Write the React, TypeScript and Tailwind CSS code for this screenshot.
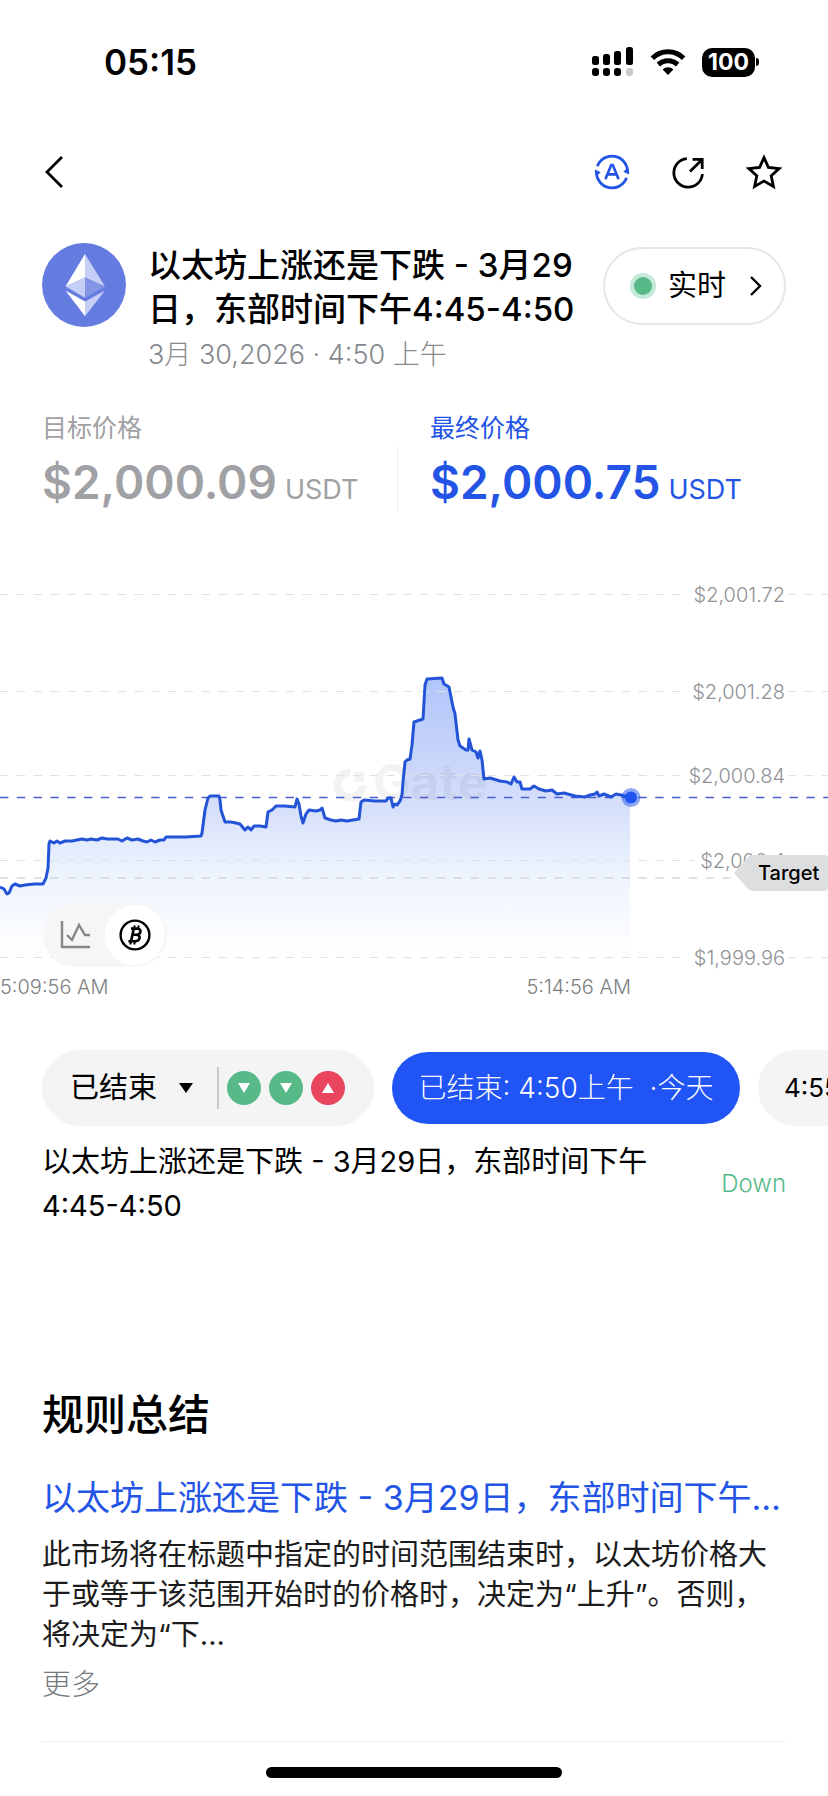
import * as React from "react";
import { clsx } from "clsx";

const GRID_LINES = [
    { y: 34, label: "$2,001.72", lineEnd: 682 },
    { y: 131, label: "$2,001.28", lineEnd: 682 },
    { y: 215, label: "$2,000.84", lineEnd: 682 },
    { y: 300, label: "$2,000.4", lineEnd: 694 },
    { y: 397, label: "$1,999.96", lineEnd: 682 },
];

const CURRENT_Y = 237;
const TARGET_Y = 318;

const PRICE_POINTS = [
    [0, 327], [4, 329], [7, 334], [9, 333], [12, 326], [15, 324], [20, 326], [25, 325],
    [34, 324], [43, 324], [46, 318], [48, 308], [49, 284], [50, 281], [54, 283], [57, 281],
    [60, 283], [65, 281], [72, 281], [82, 279], [87, 280], [91, 279], [97, 280], [102, 278],
    [107, 279], [118, 279], [122, 281], [127, 278], [132, 280], [138, 279], [143, 281],
    [147, 282], [151, 280], [155, 282], [160, 280], [164, 280], [166, 277], [185, 277],
    [201, 276], [202, 273], [205, 250], [208, 238], [210, 236], [219, 236], [220, 240],
    [221, 250], [225, 262], [231, 262], [236, 263], [240, 264], [245, 270], [248, 267],
    [251, 270], [254, 266], [260, 266], [266, 267], [268, 252], [272, 250], [276, 246],
    [285, 246], [295, 247], [297, 239], [299, 244], [301, 256], [303, 263], [306, 254],
    [309, 250], [316, 251], [320, 250], [322, 248], [325, 258], [331, 260], [336, 261],
    [341, 260], [347, 261], [353, 260], [359, 259], [361, 242], [364, 240], [375, 241],
    [386, 241], [388, 238], [391, 238], [393, 247], [395, 244], [397, 245], [400, 241],
    [402, 235], [403, 222], [405, 202], [407, 200], [410, 199], [412, 185], [414, 162],
    [423, 159], [425, 125], [427, 119], [442, 118], [444, 124], [449, 127], [453, 147],
    [455, 154], [458, 180], [460, 186], [466, 190], [468, 190], [469, 179], [472, 190],
    [476, 192], [478, 198], [480, 191], [482, 200], [484, 219], [490, 218], [500, 221],
    [507, 222], [511, 224], [514, 217], [517, 222], [520, 222], [522, 229], [530, 229],
    [534, 226], [539, 229], [546, 231], [552, 230], [557, 234], [564, 233], [575, 236],
    [585, 237], [590, 235], [595, 234], [597, 232], [599, 236], [604, 234], [611, 237],
    [616, 234], [621, 235], [625, 236], [630, 237],
];

const LINE_PATH = PRICE_POINTS.map(([x, y], i) => `${i === 0 ? "M" : "L"}${x} ${y}`).join(" ");

const RESULTS = [
    { id: 1, up: false },
    { id: 2, up: false },
    { id: 3, up: true },
];

function StatusBar() {
    return (
        <div className="flex h-[124px] items-center justify-between pl-[104px] pr-[69px]">
            <span className="text-[35px] font-semibold leading-10">05:15</span>
            <div className="flex items-center gap-4">
                <svg className="h-[30px] w-[42px]" viewBox="0 0 42 30" aria-hidden="true">
                    <rect x="0" y="9" width="7" height="9" rx="2.5" />
                    <rect x="11" y="7" width="7" height="11" rx="2.5" />
                    <rect x="22" y="4" width="7" height="14" rx="2.5" />
                    <rect x="34" y="0" width="7" height="18" rx="2.5" />
                    <rect x="0" y="21" width="7" height="8" rx="3" />
                    <rect x="11" y="21" width="7" height="8" rx="3" />
                    <rect x="22" y="21" width="7" height="8" rx="3" />
                    <rect x="34" y="21" width="7" height="8" rx="3" fill="#c9c9c9" />
                </svg>
                <svg className="h-[28px] w-[36px]" viewBox="0 0 36 28" fill="none" stroke="#000" strokeWidth="5" aria-hidden="true">
                    <path d="M2.4 10.2a22.4 22.4 0 0 1 31.2 0" />
                    <path d="M8.4 16.6a13.8 13.8 0 0 1 19.2 0" />
                    <path d="M18 27l-5.4-5.4a7.6 7.6 0 0 1 10.8 0z" fill="#000" stroke="none" />
                </svg>
                <div className="flex items-center gap-px">
                    <span className="flex h-[29px] w-[53px] items-center justify-center rounded-[10px] bg-black text-[23px] font-bold leading-none text-white">
                        100
                    </span>
                    <span className="h-2 w-[3px] rounded-r-full bg-black" />
                </div>
            </div>
        </div>
    );
}

function NavBar() {
    return (
        <nav className="flex h-24 items-center justify-between pl-[42px] pr-[46px]">
            <button type="button" aria-label="返回">
                <svg className="h-9 w-6" viewBox="0 0 24 36" fill="none" stroke="#000" strokeWidth="2.8">
                    <path d="M20 3L5 18l15 15" />
                </svg>
            </button>
            <div className="flex items-center gap-10">
                <button type="button" aria-label="翻译">
                    <svg className="size-9" viewBox="0 0 36 36" fill="none" stroke="#2354e6" strokeWidth="2.8">
                        <path d="M3.4 12.2A15.600 15.600 0 0 1 33.600 18" />
                        <path d="M32.600 23.8A15.600 15.600 0 0 1 2.400 18" />
                        <path d="M1.2 16l5 2.600-4 2.200zM34.800 20l-5-2.600 4-2.200z" fill="#2354e6" strokeWidth="1" />
                        <path d="M11.4 25.2L17.2 11h1.600l5.800 14.200M13.6 20.4h8.800" strokeWidth="2.6" />
                    </svg>
                </button>
                <button type="button" aria-label="分享">
                    <svg className="size-9" viewBox="0 0 36 36" fill="none" stroke="#000" strokeWidth="2.8">
                        <path d="M16.8 4.6A14.3 14.3 0 1 0 32.4 20" />
                        <path d="M20 17.6L31.4 6.2M22.6 5.4h9.6V15" />
                    </svg>
                </button>
                <button type="button" aria-label="收藏">
                    <svg className="size-9" viewBox="0 0 36 36" fill="none" stroke="#000" strokeWidth="2.8">
                        <path d="M18 3.600l4.400 9.800 10.800 1.200-8 7.200 2.200 10.600L18 27l-9.400 5.400 2.200-10.600-8-7.200 10.800-1.200z" />
                    </svg>
                </button>
            </div>
        </nav>
    );
}

function EthereumLogo() {
    return (
        <svg className="size-[84px] shrink-0" viewBox="0 0 84 84" role="img" aria-label="Ethereum">
            <circle cx="42" cy="42" r="42" fill="#647be0" />
            <path d="M43 11v23.5L23.5 43.5z" fill="#fff" />
            <path d="M43 11v23.5L63 43.5z" fill="#c5cef5" />
            <path d="M43 34.5v20.2L23.5 43.5z" fill="#c5cef5" />
            <path d="M43 34.5v20.2L63 43.5z" fill="#8495e6" />
            <path d="M43 58.6v14.6L23.5 47.4z" fill="#fff" />
            <path d="M43 58.6v14.6L63 47.4z" fill="#c5cef5" />
        </svg>
    );
}

function MarketHeader() {
    return (
        <header className="flex items-start px-[42px] pt-[23px]">
            <EthereumLogo />
            <div className="ml-[22px] min-w-0 flex-1">
                <h1 className="text-[33px] font-medium leading-[44px]">
                    以太坊上涨还是下跌 - 3月29日，东部时间下午4:45-4:50
                </h1>
                <p className="mt-0.5 text-[27px] font-light leading-[44px] text-[#85888c]">3月 30,2026 · 4:50 上午</p>
            </div>
            <button
                type="button"
                className="ml-4 mt-1 flex h-[78px] w-[183px] shrink-0 items-center rounded-full border-2 border-[#e6e6e6] pl-[25px]"
            >
                <span className="flex size-[26px] items-center justify-center rounded-full bg-[#c3e9d8]">
                    <span className="size-[18px] rounded-full bg-[#56b987]" />
                </span>
                <span className="ml-3 text-[29px]">实时</span>
                <svg className="ml-6 h-6 w-3" viewBox="0 0 12 24" fill="none" stroke="#000" strokeWidth="2.4">
                    <path d="M1 3l9 9-9 9" />
                </svg>
            </button>
        </header>
    );
}

function Price({ label, value, active }: { label: string; value: string; active?: boolean }) {
    return (
        <div className={active ? "text-[#2354e6]" : "text-[#9fa1a4]"}>
            <div className="text-[25px] leading-9">{label}</div>
            <div className="mt-3 flex items-baseline gap-2">
                <span className="text-[46px] font-semibold leading-[48px]">{value}</span>
                <span className="text-[27px]">USDT</span>
            </div>
        </div>
    );
}

function PriceChart() {
    const [mode, setMode] = React.useState("coin");

    return (
        <section className="relative">
            <svg className="block w-full" viewBox="0 0 828 450">
                <defs>
                    <linearGradient id="area" x1="0" y1="118" x2="0" y2="397" gradientUnits="userSpaceOnUse">
                        <stop offset="0" stopColor="#2360f0" stopOpacity="0.36" />
                        <stop offset="0.5" stopColor="#2354e6" stopOpacity="0.17" />
                        <stop offset="0.72" stopColor="#2f7bf0" stopOpacity="0.08" />
                        <stop offset="1" stopColor="#2f7bf0" stopOpacity="0" />
                    </linearGradient>
                </defs>

                <path d={`${LINE_PATH} V397 H0 Z`} fill="url(#area)" />

                {/* Watermark */}
                <g opacity="0.045">
                    <path d="M350 212.500a12.500 12.500 0 1 0 12.500 12.500" fill="none" stroke="#000" strokeWidth="8" />
                    <rect x="354" y="212" width="10" height="10" />
                    <text x="373" y="240" fontSize="50" fontWeight="700">Gate</text>
                </g>

                {/* Price grid */}
                {GRID_LINES.map((line) => (
                    <g key={line.label}>
                        <path
                            d={`M0 ${line.y + 0.5}H${line.lineEnd}M788 ${line.y + 0.5}H828`}
                            stroke="#dfe1e5"
                            strokeDasharray="8.4 8.4"
                        />
                        <text x="785" y={line.y + 8} textAnchor="end" fontSize="20" fontWeight="300" fill="#909296">
                            {line.label}
                        </text>
                    </g>
                ))}
                <path d={`M0 ${TARGET_Y}H734`} stroke="#d5d7dc" strokeWidth="1.5" strokeDasharray="8.4 8.4" />
                <path d={`M0 ${CURRENT_Y + 0.5}H828`} stroke="#4a5fd0" strokeWidth="1.4" strokeDasharray="8.4 8.4" />

                <path d={LINE_PATH} fill="none" stroke="#2354d8" strokeWidth="3" strokeLinejoin="round" />
                <circle cx="631" cy="237.500" r="9.500" fill="#2354e6" fillOpacity="0.5" />
                <circle cx="631" cy="237.500" r="6" fill="#1f54f2" />

                <path d="M734 313L748 297q2-2 5-2h71q4 0 4 3v30q0 3-4 3h-71q-3 0-5-2z" fill="#dcdee0" />
                <text x="758" y="320" fontSize="20" fontWeight="500" fill="#000">Target</text>

                <text x="0" y="434" fontSize="20" fontWeight="300" fill="#7d7f83">5:09:56 AM</text>
                <text x="631" y="434" textAnchor="end" fontSize="20" fontWeight="300" fill="#7d7f83">5:14:56 AM</text>
            </svg>

            {/* Chart mode switch */}
            <div className="absolute bottom-[43px] left-[43px] flex rounded-full bg-[#f6f6f6] p-0.5">
                <button
                    type="button"
                    aria-label="折线图"
                    onClick={() => setMode("line")}
                    className={clsx("flex size-[60px] items-center justify-center rounded-full", mode === "line" && "bg-white")}
                >
                    <svg className="h-8 w-8" viewBox="0 0 32 32" fill="none" stroke="#85878b" strokeWidth="2.4">
                        <path d="M3 2v26h28" />
                        <path d="M8 16l5 5 7-15 6 10h5" />
                    </svg>
                </button>
                <button
                    type="button"
                    aria-label="价格"
                    onClick={() => setMode("coin")}
                    className={clsx("flex size-[60px] items-center justify-center rounded-full", mode === "coin" && "bg-white")}
                >
                    <svg className="h-8 w-8" viewBox="0 0 32 32" fill="none" stroke="#000">
                        <circle cx="16" cy="16" r="14.400" strokeWidth="2.4" />
                        <g strokeWidth="2.6">
                            <path d="M12 9.600h6.400c2.600.4 3.400 1.800 3 3.400-.4 1.800-1.800 2.800-4 2.800h-3.600M17 15.800c3 .2 4 1.700 3.500 3.500-.5 2-2 3-4.500 3H9.400M14.800 9.800l-2.800 12.400" />
                            <path d="M15.800 6.400l-.8 3.200M19.800 6.400l-.8 3.200M12 22.400l-.8 3.200M16 22.400l-.8 3.200" strokeWidth="2" />
                        </g>
                    </svg>
                </button>
            </div>
        </section>
    );
}

function RoundTabs() {
    return (
        <div className="flex items-center gap-[18px] overflow-hidden pl-[42px]">
            <button type="button" className="flex h-[76px] w-[332px] shrink-0 items-center rounded-full bg-[#f4f4f4] pl-[28px]">
                <span className="text-[29px]">已结束</span>
                <svg className="ml-[22px] h-2.5 w-[14px]" viewBox="0 0 14 10">
                    <path d="M0 0h14L7 10z" />
                </svg>
                <span className="ml-6 h-[42px] w-0.5 bg-[#c9c9c9]" />
                <span className="ml-2 flex gap-2">
                    {RESULTS.map((result) => (
                        <span
                            key={result.id}
                            className={clsx(
                                "flex size-[34px] items-center justify-center rounded-full",
                                result.up ? "bg-[#ea4560]" : "bg-[#56b987]"
                            )}
                        >
                            <svg className={clsx("h-2.5 w-3", result.up && "rotate-180")} viewBox="0 0 12 10" fill="#fff">
                                <path d="M0 0h12L6 10z" />
                            </svg>
                        </span>
                    ))}
                </span>
            </button>
            <button
                type="button"
                className="h-[72px] w-[348px] shrink-0 whitespace-pre rounded-full bg-[#2154f5] text-[28px] font-light text-white"
            >
                已结束: 4:50上午  ·今天
            </button>
            <button type="button" className="h-[76px] w-[200px] shrink-0 rounded-full bg-[#f4f4f4] pl-[26px] text-left text-[26px]">
                4:55上午
            </button>
        </div>
    );
}

function Rules() {
    return (
        <section className="px-[42px] pt-[157px]">
            <h2 className="text-[42px] font-medium leading-[60px]">规则总结</h2>
            <h3 className="mt-7 truncate text-[34px] leading-[50px] text-[#2354e6]">
                以太坊上涨还是下跌 - 3月29日，东部时间下午4:45-4:50
            </h3>
            <p className="mt-3 text-[29px] leading-10 text-[#1c1c1c]">
                此市场将在标题中指定的时间范围结束时，以太坊价格大于或等于该范围开始时的价格时，决定为“上升”。否则，将决定为“下...
            </p>
            <button type="button" className="mt-2.5 text-[29px] font-light leading-10 text-[#77797d]">
                更多
            </button>
            <hr className="mt-9 border-[#f0f0f0]" />
        </section>
    );
}

export default function App() {
    return (
        <main className="min-h-screen w-full overflow-hidden bg-white pb-4 font-['Inter','Noto_Sans_CJK_SC',sans-serif] text-black">
            <StatusBar />
            <NavBar />
            <MarketHeader />

            <section className="grid grid-cols-[355px_1fr] px-[42px] pt-[33px]">
                <Price label="目标价格" value="$2,000.09" />
                <div className="flex items-end">
                    <span className="h-16 w-px bg-[#ececec]" />
                    <div className="ml-8">
                        <Price label="最终价格" value="$2,000.75" active />
                    </div>
                </div>
            </section>

            <div className="mt-[49px]">
                <PriceChart />
            </div>

            <div className="mt-10">
                <RoundTabs />
            </div>

            <div className="flex items-center justify-between px-[42px] pt-[14px]">
                <p className="w-[640px] text-[29px] leading-[44px]">以太坊上涨还是下跌 - 3月29日，东部时间下午4:45-4:50</p>
                <span className="text-2xl font-light text-[#56b987]">Down</span>
            </div>

            <Rules />

            <div className="mx-auto mt-[25px] h-[11px] w-[296px] rounded-full bg-black" />
        </main>
    );
}
